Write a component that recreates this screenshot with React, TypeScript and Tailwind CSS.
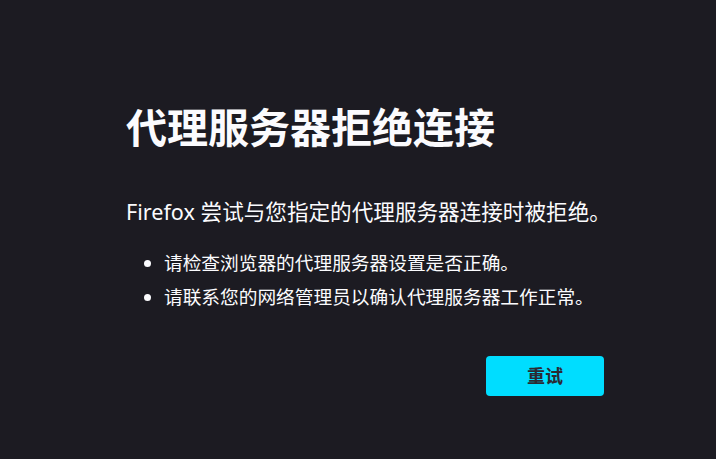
import React from "react";

export default function App() {
  const font = { fontFamily: '"Noto Sans", "Noto Sans CJK SC", sans-serif' };
  return (
    <div
      className="w-[716px] h-[459px] bg-[#1c1b22] text-[#fbfbfe] overflow-hidden"
      style={font}
    >
      <div className="ml-[126px] w-[478px] pt-[103px] flex flex-col">
        <h1 className="text-[41px] leading-[49px] font-bold whitespace-nowrap">
          代理服务器拒绝连接
        </h1>
        <p className="mt-[44px] text-[21.6px] leading-[32px] whitespace-nowrap">
          Firefox 尝试与您指定的代理服务器连接时被拒绝。
        </p>
        <ul className="mt-[18px] list-disc pl-[38px] text-[18.7px] leading-[34px] whitespace-nowrap">
          <li>请检查浏览器的代理服务器设置是否正确。</li>
          <li>请联系您的网络管理员以确认代理服务器工作正常。</li>
        </ul>
        <div className="mt-[42px] flex justify-end">
          <button className="w-[118px] h-[40px] rounded-[4px] bg-[#00ddff] text-[#2b2a33] text-[18px] font-bold">
            重试
          </button>
        </div>
      </div>
    </div>
  );
}
